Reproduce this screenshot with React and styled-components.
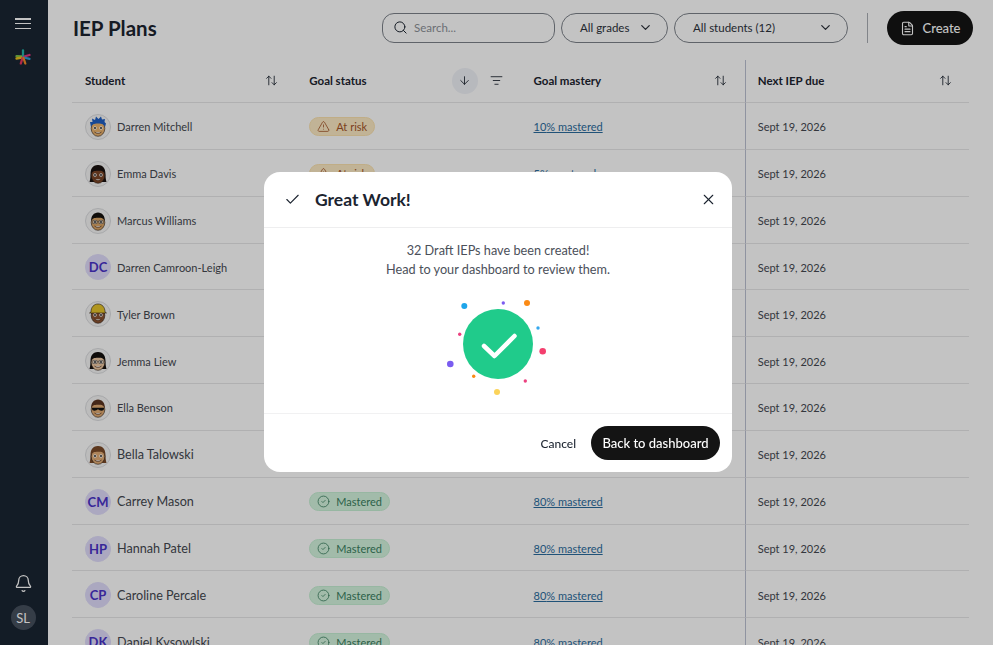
import React from 'react';
import styled, { createGlobalStyle } from 'styled-components';
import { ArrowUpDown, ArrowDown, ListFilter, Search, ChevronDown, FileText, Check, X, Bell, TriangleAlert, CircleCheck } from 'lucide-react';

const GlobalStyle = createGlobalStyle`
  html, body {
    margin: 0;
    height: 100%;
    overflow: hidden;
    background: #fff;
    font-family: Lato, "Liberation Sans", sans-serif;
  }
  * { box-sizing: border-box; }
`;

const Page = styled.div`
  display: flex;
  height: 645px;
  overflow: hidden;
  background: #fff;
`;

const Sidebar = styled.aside`
  width: 48px;
  flex-shrink: 0;
  background: #1a2532;
  display: flex;
  flex-direction: column;
  align-items: center;
  padding: 18px 2px 15px 0;
`;

const MenuBtn = styled.div`
  width: 16px;
  height: 11px;
  display: flex;
  flex-direction: column;
  justify-content: space-between;
  span {
    display: block;
    height: 1.5px;
    background: #fff;
  }
`;

const LogoWrap = styled.div`
  margin-top: 20px;
  height: 16px;
`;

const SideBottom = styled.div`
  margin-top: auto;
  display: flex;
  flex-direction: column;
  align-items: center;
  gap: 12px;
  color: #fff;
`;

const UserChip = styled.div`
  width: 25px;
  height: 25px;
  border-radius: 50%;
  background: #46505e;
  color: #fff;
  font-size: 13px;
  display: flex;
  align-items: center;
  justify-content: center;
`;

const Main = styled.main`
  flex: 1;
  min-width: 0;
  padding: 11px 20px 0 24px;
`;

const Toolbar = styled.header`
  display: flex;
  align-items: center;
  height: 34px;
`;

const Title = styled.h1`
  margin: 0 auto 0 1px;
  font-size: 20.5px;
  font-weight: 700;
  color: #1c2430;
`;

const SearchBox = styled.div`
  width: 173px;
  height: 30px;
  border: 1px solid #7d828a;
  border-radius: 12px;
  display: flex;
  align-items: center;
  gap: 6px;
  padding: 0 10px 1px;
  font-size: 11.5px;
  color: #8d9198;
  svg { color: #1c2430; }
`;

const Select = styled.div`
  margin-left: 6px;
  width: ${p => p.$w}px;
  height: 30px;
  border: 1px solid #7d828a;
  border-radius: 15px;
  display: flex;
  align-items: center;
  justify-content: space-between;
  padding: 0 14px 1px 18px;
  font-size: 11.5px;
  color: #2c323b;
`;

const Divider = styled.div`
  width: 1px;
  height: 30px;
  background: #a9adb3;
  margin: 0 19px;
`;

const CreateBtn = styled.button`
  width: 86px;
  height: 34px;
  border: 0;
  border-radius: 17px;
  background: #141414;
  color: #fff;
  font: 500 13px Lato, sans-serif;
  display: flex;
  align-items: center;
  justify-content: center;
  gap: 8px;
`;

const Table = styled.div`
  margin-top: 15px;
  display: grid;
  grid-template-columns: repeat(4, 224.25px);
`;

const HeadCell = styled.div`
  height: 43px;
  padding: 0 ${p => (p.$sticky ? 17 : 18)}px 1px ${p => (p.$sticky ? 12 : 13)}px;
  display: flex;
  align-items: center;
  gap: 12px;
  font-size: 11.5px;
  font-weight: 700;
  color: #1c2430;
  border-bottom: 1px solid #e6e6e8;
  ${p => p.$sticky && 'border-left: 1.5px solid #bcc0d2;'}
  span { margin-right: auto; }
`;

const SortedIcon = styled.div`
  width: 26px;
  height: 26px;
  border-radius: 50%;
  background: #f0f2f8;
  display: flex;
  align-items: center;
  justify-content: center;
`;

const Cell = styled.div`
  height: 46.85px;
  display: flex;
  align-items: center;
  padding: 2px 0 0 ${p => (p.$sticky ? 12 : 13)}px;
  font-size: ${p => (p.$big ? 12.6 : 11)}px;
  color: #444850;
  border-bottom: 1px solid #e6e6e8;
  ${p => p.$sticky && 'border-left: 1.5px solid #bcc0d2;'}
`;

const AvatarCircle = styled.div`
  width: 26px;
  height: 26px;
  border-radius: 50%;
  flex-shrink: 0;
  margin-right: 6px;
  overflow: hidden;
  display: flex;
  align-items: center;
  justify-content: center;
  background: ${p => (p.$initials ? '#e0dcfb' : '#f6f6f6')};
  border: 1px solid ${p => (p.$initials ? '#e0dcfb' : '#dcdde0')};
  color: #4a32c8;
  font-size: 13px;
  font-weight: 700;
`;

const Badge = styled.div`
  height: 19px;
  border-radius: 10px;
  padding: 0 7px 0 7px;
  display: flex;
  align-items: center;
  gap: 6px;
  font-size: 11px;
  color: ${p => (p.$risk ? '#a4552a' : '#3b7f5f')};
  background: ${p => (p.$risk ? '#fdebc4' : '#d4f5df')};
  border: 1px solid ${p => (p.$risk ? '#fbe2b0' : '#c6f0d4')};
`;

const MasteryLink = styled.a`
  font-size: 11px;
  color: #2b6c9e;
  text-decoration: underline;
`;

const Overlay = styled.div`
  position: fixed;
  inset: 0;
  background: rgba(0, 0, 0, 0.235);
  display: flex;
  align-items: center;
  justify-content: center;
  padding: 0 0 1px 3px;
`;

const Modal = styled.div`
  width: 468px;
  height: 300px;
  background: #fff;
  border-radius: 16px;
  display: flex;
  flex-direction: column;
`;

const ModalHead = styled.div`
  height: 56px;
  padding: 0 15px 0 20px;
  display: flex;
  align-items: center;
  border-bottom: 1px solid #eeeeef;
  color: #1c2430;
`;

const ModalTitle = styled.h2`
  margin: 0 auto 0 14px;
  font-size: 17.5px;
  font-weight: 700;
`;

const ModalBody = styled.div`
  flex: 1;
  padding-top: 13px;
  text-align: center;
  font-size: 12.7px;
  line-height: 19px;
  color: #4b505a;
  svg { display: block; margin: 17px auto 0; }
`;

const ModalFoot = styled.div`
  height: 59px;
  padding: 0 12px;
  display: flex;
  align-items: center;
  justify-content: flex-end;
  gap: 15px;
  border-top: 1px solid #f1f1f2;
`;

const CancelBtn = styled.button`
  border: 0;
  padding: 0;
  background: none;
  font: 500 12px Lato, sans-serif;
  color: #1c2430;
`;

const PrimaryBtn = styled.button`
  width: 129px;
  height: 34px;
  border: 0;
  border-radius: 17px;
  background: #141414;
  color: #fff;
  font: 500 13px Lato, sans-serif;
`;

const Logo = () => (
  <svg width="16" height="16" viewBox="0 0 16 16" fill="none" strokeWidth="2.3" strokeLinecap="round">
    <path d="M1.500 7.200 7 7.500" stroke="#7cc04a" />
    <path d="M1.500 9.500 7 8.500" stroke="#e8c21e" />
    <path d="M8 1.500V7" stroke="#1fb5a8" />
    <path d="M14.500 6 9 7.500" stroke="#e0357f" />
    <path d="M14.500 9.800 9 8.500" stroke="#2b9fd8" />
    <path d="M7.500 9 5.800 14.500" stroke="#e8355f" />
    <path d="M8.500 9l1.800 5.500" stroke="#f28c28" />
  </svg>
);

// little cartoon faces used for the student avatars
const Face = ({ skin, hair, hat, long, spiky, glasses, shades }) => (
  <svg width="24" height="24" viewBox="0 0 24 24">
    {long && <path d="M4.500 12c0-6 3-9 7.500-9s7.500 3 7.500 9c0 4 .5 6 1 8H3.500c.5-2 1-4 1-8z" fill={hair} />}
    <ellipse cx="12" cy="13.500" rx="6.800" ry="7.800" fill={skin} stroke="#2a1d14" strokeWidth=".6" />
    {hat && <path d="M5 10c0-5 3-8 7-8s7 3 7 8l1.500 1h-17z" fill={hat} stroke="#2a1d14" strokeWidth=".6" />}
    {spiky && <path d="M5 12 4 7l2.500 0L6 3.500l3 1.500L10 1.500l2.500 2.500L15 1.500l1 3 3-.5-.5 3 1.500 1.500L19 12c-1-2.500-2.500-3.500-7-3.500S6 9.500 5 12z" fill={hair} />}
    {!hat && !spiky && <path d="M5.300 12c-.5-5 2.700-8.500 6.700-8.500s7.200 3.500 6.700 8.500c-1-2.500-2.500-3.200-6.700-3.200S6.300 9.500 5.300 12z" fill={hair} />}
    {!shades && <g fill="#fff"><circle cx="9" cy="13" r="1.700" /><circle cx="15" cy="13" r="1.700" /></g>}
    {glasses && <path d="M6.700 11.600h4.400v2.800H6.700zM12.900 11.600h4.400v2.800h-4.400zM11.100 12.600h1.800" fill="none" stroke="#555" strokeWidth=".6" />}
    {shades
      ? <path d="M6 11.800h12v1c0 1-1 2-2.500 2s-2.500-1-3.500-1.500c-1 .5-2 1.500-3.500 1.500S6 13.800 6 12.800z" fill="#111" />
      : <g fill="#1c1c1c"><circle cx="9" cy="13" r=".9" /><circle cx="15" cy="13" r=".9" /></g>}
    <path d="M8.800 17.300c1.900 1.500 4.500 1.500 6.400 0" fill="#fff" stroke="#4a2a18" strokeWidth=".7" strokeLinecap="round" />
  </svg>
);

const Celebration = () => {
  const dots = [
    [463.3, 306, 3, '#1ea5ea'], [502.3, 303, 1.7, '#7c5cf0'], [526, 303, 3, '#fb8a14'],
    [537, 328, 1.7, '#35a8ee'], [458.7, 334.3, 1.7, '#ec4180'], [541.7, 351.3, 3.3, '#f43f6e'],
    [449.3, 364, 3.3, '#7a5cf0'], [472.7, 376.3, 1.7, '#fb8a14'], [524.3, 381, 1.7, '#ec4180'],
    [496, 392, 3, '#fbd35a'],
  ];
  return (
    <svg width="104" height="104" viewBox="445 296 104 104">
      <circle cx="497" cy="344" r="35" fill="#20cb8b" />
      <path d="M483 346l10.500 10 20-20" fill="none" stroke="#fff" strokeWidth="4.500" strokeLinecap="round" strokeLinejoin="round" />
      {dots.map(([x, y, r, c]) => <circle key={x} cx={x} cy={y} r={r} fill={c} />)}
    </svg>
  );
};

const students = [
  { name: 'Darren Mitchell', face: { skin: '#eab36f', hair: '#1f5fc4', spiky: true }, risk: true, pct: 10 },
  { name: 'Emma Davis', face: { skin: '#7a4526', hair: '#1a1210', long: true }, risk: true, pct: 5 },
  { name: 'Marcus Williams', face: { skin: '#dba566', hair: '#15110e', glasses: true }, risk: true, pct: 20 },
  { name: 'Darren Camroon-Leigh', initials: 'DC', risk: true, pct: 20 },
  { name: 'Tyler Brown', face: { skin: '#8a5230', hair: '#1a1210', hat: '#e6c52a' }, risk: true, pct: 30 },
  { name: 'Jemma Liew', face: { skin: '#eec9a2', hair: '#14100e', long: true, glasses: true }, risk: true, pct: 40 },
  { name: 'Ella Benson', face: { skin: '#e0aa72', hair: '#5a3420', shades: true }, risk: false, pct: 60 },
  { name: 'Bella Talowski', big: true, face: { skin: '#e2ad76', hair: '#7a4a28', long: true }, risk: false, pct: 70 },
  { name: 'Carrey Mason', big: true, initials: 'CM', pct: 80 },
  { name: 'Hannah Patel', big: true, initials: 'HP', pct: 80 },
  { name: 'Caroline Percale', big: true, initials: 'CP', pct: 80 },
  { name: 'Daniel Kysowlski', big: true, initials: 'DK', pct: 80 },
];

const Sort = () => <ArrowUpDown size={13} strokeWidth={1.6} color="#1c2430" />;

export default function App() {
  return (
    <Page>
      <GlobalStyle />
      <Sidebar>
        <MenuBtn><span /><span /><span /></MenuBtn>
        <LogoWrap><Logo /></LogoWrap>
        <SideBottom>
          <Bell size={19} strokeWidth={1.6} />
          <UserChip>SL</UserChip>
        </SideBottom>
      </Sidebar>
      <Main>
        <Toolbar>
          <Title>IEP Plans</Title>
          <SearchBox><Search size={15} strokeWidth={1.6} />Search...</SearchBox>
          <Select $w={107}>All grades<ChevronDown size={15} strokeWidth={2} /></Select>
          <Select $w={174}>All students (12)<ChevronDown size={15} strokeWidth={2} /></Select>
          <Divider />
          <CreateBtn><FileText size={15} strokeWidth={1.8} />Create</CreateBtn>
        </Toolbar>
        <Table>
          <HeadCell><span>Student</span><Sort /></HeadCell>
          <HeadCell>
            <span>Goal status</span>
            <SortedIcon><ArrowDown size={13} strokeWidth={1.6} /></SortedIcon>
            <ListFilter size={13} strokeWidth={1.6} />
          </HeadCell>
          <HeadCell><span>Goal mastery</span><Sort /></HeadCell>
          <HeadCell $sticky><span>Next IEP due</span><Sort /></HeadCell>
          {students.map(s => (
            <React.Fragment key={s.name}>
              <Cell $big={s.big}>
                <AvatarCircle $initials={!!s.initials}>{s.initials || <Face {...s.face} />}</AvatarCircle>
                {s.name}
              </Cell>
              <Cell>
                {s.risk
                  ? <Badge $risk><TriangleAlert size={13} strokeWidth={1.5} />At risk</Badge>
                  : <Badge><CircleCheck size={13} strokeWidth={1.5} />Mastered</Badge>}
              </Cell>
              <Cell><MasteryLink>{s.pct}% mastered</MasteryLink></Cell>
              <Cell $sticky>Sept 19, 2026</Cell>
            </React.Fragment>
          ))}
        </Table>
      </Main>
      <Overlay>
        <Modal>
          <ModalHead>
            <Check size={17} strokeWidth={1.6} />
            <ModalTitle>Great Work!</ModalTitle>
            <X size={17} strokeWidth={1.5} />
          </ModalHead>
          <ModalBody>
            32 Draft IEPs have been created!<br />
            Head to your dashboard to review them.
            <Celebration />
          </ModalBody>
          <ModalFoot>
            <CancelBtn>Cancel</CancelBtn>
            <PrimaryBtn>Back to dashboard</PrimaryBtn>
          </ModalFoot>
        </Modal>
      </Overlay>
    </Page>
  );
}
